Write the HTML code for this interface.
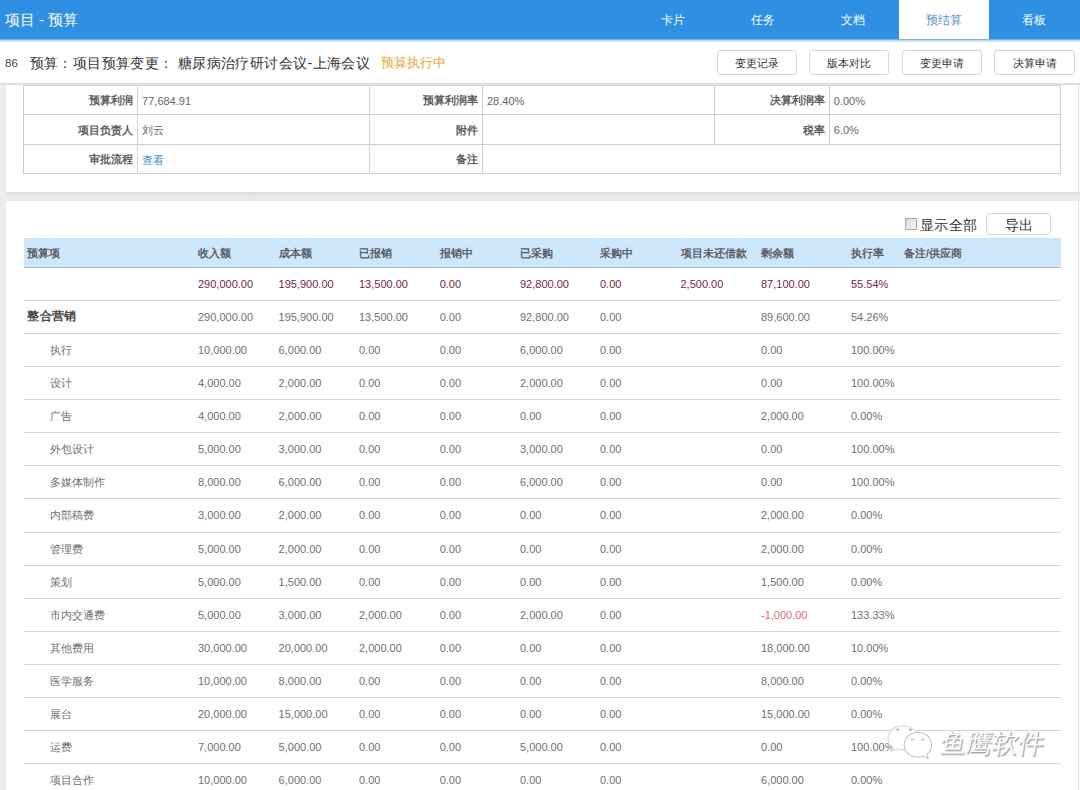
<!DOCTYPE html><html><head><meta charset="utf-8"><style>
*{margin:0;padding:0;box-sizing:border-box}
html,body{width:1080px;height:790px;overflow:hidden;background:#ededed;font-family:"Liberation Sans", sans-serif;}
.a{position:absolute;white-space:nowrap}
#hd{position:absolute;left:0;top:0;width:1080px;height:39px;background:#2e8fe3;}
#hd .t{left:5px;top:11px;font-size:14.5px;color:#fff;line-height:18px}
.tab{position:absolute;top:0;height:39px;width:90px;text-align:center;font-size:12px;line-height:40px;color:#fff}
.tab.on{background:#fff;color:#5a92c8}
#tb{position:absolute;left:0;top:39px;width:1080px;height:46px;background:#fff;border-bottom:2.5px solid #e0e0e0}
.btn{position:absolute;top:50.3px;height:24.5px;width:80.3px;border:1px solid #d6d8db;border-radius:3px;background:#fff;font-size:11px;line-height:24px;text-align:center;color:#333}
.card{position:absolute;left:5.7px;width:1074.3px;background:#fff}
.it{position:absolute;left:23.5px;top:85.3px;width:1037px;border-collapse:collapse}
.ln{position:absolute;background:#d0d0d0}
.lab{font-size:11px;color:#5e5e5e;font-weight:bold;text-align:right}
.val{font-size:11px;color:#707070}
.cell{position:absolute;font-size:11px;color:#707070;white-space:nowrap;line-height:14px}
.hcell{position:absolute;font-size:11px;color:#5a6068;font-weight:bold;white-space:nowrap;line-height:14px}
.red{color:#74283a}
.neg{color:#e06a78}
</style></head><body>
<div id="hd"><span class="a t">项目 - 预算</span>
<div class="tab" style="left:628.0px">卡片</div>
<div class="tab" style="left:718.2px">任务</div>
<div class="tab" style="left:808.4px">文档</div>
<div class="tab on" style="left:898.6px">预结算</div>
<div class="tab" style="left:988.8px">看板</div>
</div>
<div id="tb"></div>
<div class="a" style="left:0;top:38.5px;width:1080px;height:4px;background:linear-gradient(#5d9fd6,#bfe0fa 40%,#fff)"></div>
<span class="a" style="left:5px;top:55px;font-size:11.5px;color:#444;line-height:16px">86</span>
<span class="a" style="left:29.6px;top:53px;font-size:14px;letter-spacing:0.4px;color:#333;line-height:20px">预算：项目预算变更： 糖尿病治疗研讨会议-上海会议</span>
<span class="a" style="left:381px;top:55px;font-size:12.5px;color:#e9a52e;line-height:16px">预算执行中</span>
<div class="btn" style="left:716.6px">变更记录</div>
<div class="btn" style="left:809.2px">版本对比</div>
<div class="btn" style="left:901.8px">变更申请</div>
<div class="btn" style="left:994.4px">决算申请</div>
<div class="card" style="top:85px;height:107.5px"></div>
<div class="ln" style="left:23.5px;top:84.8px;width:1037px;height:1px"></div>
<div class="ln" style="left:23.5px;top:114.2px;width:1037px;height:1px"></div>
<div class="ln" style="left:23.5px;top:144.1px;width:1037px;height:1px"></div>
<div class="ln" style="left:23.5px;top:173.3px;width:1037px;height:1px"></div>
<div class="ln" style="left:23.0px;top:85px;width:1px;height:89px"></div>
<div class="ln" style="left:136.8px;top:85px;width:1px;height:89px"></div>
<div class="ln" style="left:368.8px;top:85px;width:1px;height:89px"></div>
<div class="ln" style="left:481.7px;top:85px;width:1px;height:89px"></div>
<div class="ln" style="left:1059.8px;top:85px;width:1px;height:89px"></div>
<div class="ln" style="left:714.1px;top:85px;width:1px;height:59.6px"></div>
<div class="ln" style="left:828.5px;top:85px;width:1px;height:59.6px"></div>
<span class="a lab" style="right:946.7px;top:93.0px;line-height:14px">预算利润</span>
<span class="a val" style="left:142.1px;top:93.7px;line-height:14px;color:#666">77,684.91</span>
<span class="a lab" style="right:601.8px;top:93.0px;line-height:14px">预算利润率</span>
<span class="a val" style="left:487.0px;top:93.7px;line-height:14px;color:#666">28.40%</span>
<span class="a lab" style="right:255.0px;top:93.0px;line-height:14px">决算利润率</span>
<span class="a val" style="left:833.8px;top:93.7px;line-height:14px;color:#666">0.00%</span>
<span class="a lab" style="right:946.7px;top:122.7px;line-height:14px">项目负责人</span>
<span class="a val" style="left:142.1px;top:123.4px;line-height:14px;color:#666">刘云</span>
<span class="a lab" style="right:601.8px;top:122.7px;line-height:14px">附件</span>
<span class="a lab" style="right:255.0px;top:122.7px;line-height:14px">税率</span>
<span class="a val" style="left:833.8px;top:123.4px;line-height:14px;color:#666">6.0%</span>
<span class="a lab" style="right:946.7px;top:152.2px;line-height:14px">审批流程</span>
<span class="a val" style="left:142.1px;top:152.9px;line-height:14px;color:#3a8ad0">查看</span>
<span class="a lab" style="right:601.8px;top:152.2px;line-height:14px">备注</span>
<div class="a" style="left:5.7px;top:192.3px;width:1075px;height:8.4px;background:linear-gradient(#d8dadb,#e4e7e7 30%,#e8ebeb)"></div>
<div class="card" style="top:200.7px;height:600px"></div>
<div class="a" style="left:905.3px;top:218.4px;width:11.7px;height:11.6px;border:1px solid #a8a8a8;background:linear-gradient(135deg,#d8d8d8,#f6f6f6)"></div>
<span class="a" style="left:920px;top:215px;font-size:14px;letter-spacing:0.35px;color:#333;line-height:20px">显示全部</span>
<div class="a" style="left:986px;top:213.3px;width:65.4px;height:21.4px;border:1px solid #d6d8db;border-radius:3px;background:#fff;font-size:14px;line-height:22px;text-align:center;color:#333">导出</div>
<div class="a" style="left:24px;top:238.2px;width:1036.5px;height:29.4px;background:#cee6fa;border-bottom:1.8px solid #a3bccf"></div>
<span class="hcell" style="left:27px;top:245.5px">预算项</span>
<span class="hcell" style="left:198px;top:245.5px">收入额</span>
<span class="hcell" style="left:278.6px;top:245.5px">成本额</span>
<span class="hcell" style="left:359px;top:245.5px">已报销</span>
<span class="hcell" style="left:439.7px;top:245.5px">报销中</span>
<span class="hcell" style="left:520px;top:245.5px">已采购</span>
<span class="hcell" style="left:600px;top:245.5px">采购中</span>
<span class="hcell" style="left:680.5px;top:245.5px">项目未还借款</span>
<span class="hcell" style="left:761px;top:245.5px">剩余额</span>
<span class="hcell" style="left:851px;top:245.5px">执行率</span>
<span class="hcell" style="left:904px;top:245.5px">备注/供应商</span>
<span class="cell red" style="left:198px;top:276.8px">290,000.00</span>
<span class="cell red" style="left:278.6px;top:276.8px">195,900.00</span>
<span class="cell red" style="left:359px;top:276.8px">13,500.00</span>
<span class="cell red" style="left:439.7px;top:276.8px">0.00</span>
<span class="cell red" style="left:520px;top:276.8px">92,800.00</span>
<span class="cell red" style="left:600px;top:276.8px">0.00</span>
<span class="cell red" style="left:680.5px;top:276.8px">2,500.00</span>
<span class="cell red" style="left:761px;top:276.8px">87,100.00</span>
<span class="cell red" style="left:851px;top:276.8px">55.54%</span>
<div class="ln" style="left:24px;top:299.8px;width:1036.5px;height:1px;background:#d4d6d9"></div>
<div class="ln" style="left:24px;top:332.9px;width:1036.5px;height:1px;background:#d4d6d9"></div>
<div class="ln" style="left:24px;top:366.0px;width:1036.5px;height:1px;background:#d4d6d9"></div>
<div class="ln" style="left:24px;top:399.1px;width:1036.5px;height:1px;background:#d4d6d9"></div>
<div class="ln" style="left:24px;top:432.2px;width:1036.5px;height:1px;background:#d4d6d9"></div>
<div class="ln" style="left:24px;top:465.3px;width:1036.5px;height:1px;background:#d4d6d9"></div>
<div class="ln" style="left:24px;top:498.4px;width:1036.5px;height:1px;background:#d4d6d9"></div>
<div class="ln" style="left:24px;top:531.5px;width:1036.5px;height:1px;background:#d4d6d9"></div>
<div class="ln" style="left:24px;top:564.6px;width:1036.5px;height:1px;background:#d4d6d9"></div>
<div class="ln" style="left:24px;top:597.7px;width:1036.5px;height:1px;background:#d4d6d9"></div>
<div class="ln" style="left:24px;top:630.8px;width:1036.5px;height:1px;background:#d4d6d9"></div>
<div class="ln" style="left:24px;top:663.9px;width:1036.5px;height:1px;background:#d4d6d9"></div>
<div class="ln" style="left:24px;top:697.0px;width:1036.5px;height:1px;background:#d4d6d9"></div>
<div class="ln" style="left:24px;top:730.1px;width:1036.5px;height:1px;background:#d4d6d9"></div>
<div class="ln" style="left:24px;top:763.2px;width:1036.5px;height:1px;background:#d4d6d9"></div>
<div class="ln" style="left:24px;top:796.3px;width:1036.5px;height:1px;background:#d4d6d9"></div>
<span class="cell" style="left:27.4px;top:309.4px;font-size:12px;letter-spacing:0.3px;font-weight:bold;color:#4a4a4a;line-height:15px">整合营销</span>
<span class="cell" style="left:198px;top:309.9px">290,000.00</span>
<span class="cell" style="left:278.6px;top:309.9px">195,900.00</span>
<span class="cell" style="left:359px;top:309.9px">13,500.00</span>
<span class="cell" style="left:439.7px;top:309.9px">0.00</span>
<span class="cell" style="left:520px;top:309.9px">92,800.00</span>
<span class="cell" style="left:600px;top:309.9px">0.00</span>
<span class="cell" style="left:761px;top:309.9px">89,600.00</span>
<span class="cell" style="left:851px;top:309.9px">54.26%</span>
<span class="cell" style="left:49.6px;top:342.9px">执行</span>
<span class="cell" style="left:198px;top:342.9px">10,000.00</span>
<span class="cell" style="left:278.6px;top:342.9px">6,000.00</span>
<span class="cell" style="left:359px;top:342.9px">0.00</span>
<span class="cell" style="left:439.7px;top:342.9px">0.00</span>
<span class="cell" style="left:520px;top:342.9px">6,000.00</span>
<span class="cell" style="left:600px;top:342.9px">0.00</span>
<span class="cell" style="left:761px;top:342.9px">0.00</span>
<span class="cell" style="left:851px;top:342.9px">100.00%</span>
<span class="cell" style="left:49.6px;top:376.1px">设计</span>
<span class="cell" style="left:198px;top:376.1px">4,000.00</span>
<span class="cell" style="left:278.6px;top:376.1px">2,000.00</span>
<span class="cell" style="left:359px;top:376.1px">0.00</span>
<span class="cell" style="left:439.7px;top:376.1px">0.00</span>
<span class="cell" style="left:520px;top:376.1px">2,000.00</span>
<span class="cell" style="left:600px;top:376.1px">0.00</span>
<span class="cell" style="left:761px;top:376.1px">0.00</span>
<span class="cell" style="left:851px;top:376.1px">100.00%</span>
<span class="cell" style="left:49.6px;top:409.2px">广告</span>
<span class="cell" style="left:198px;top:409.2px">4,000.00</span>
<span class="cell" style="left:278.6px;top:409.2px">2,000.00</span>
<span class="cell" style="left:359px;top:409.2px">0.00</span>
<span class="cell" style="left:439.7px;top:409.2px">0.00</span>
<span class="cell" style="left:520px;top:409.2px">0.00</span>
<span class="cell" style="left:600px;top:409.2px">0.00</span>
<span class="cell" style="left:761px;top:409.2px">2,000.00</span>
<span class="cell" style="left:851px;top:409.2px">0.00%</span>
<span class="cell" style="left:49.6px;top:442.2px">外包设计</span>
<span class="cell" style="left:198px;top:442.2px">5,000.00</span>
<span class="cell" style="left:278.6px;top:442.2px">3,000.00</span>
<span class="cell" style="left:359px;top:442.2px">0.00</span>
<span class="cell" style="left:439.7px;top:442.2px">0.00</span>
<span class="cell" style="left:520px;top:442.2px">3,000.00</span>
<span class="cell" style="left:600px;top:442.2px">0.00</span>
<span class="cell" style="left:761px;top:442.2px">0.00</span>
<span class="cell" style="left:851px;top:442.2px">100.00%</span>
<span class="cell" style="left:49.6px;top:475.4px">多媒体制作</span>
<span class="cell" style="left:198px;top:475.4px">8,000.00</span>
<span class="cell" style="left:278.6px;top:475.4px">6,000.00</span>
<span class="cell" style="left:359px;top:475.4px">0.00</span>
<span class="cell" style="left:439.7px;top:475.4px">0.00</span>
<span class="cell" style="left:520px;top:475.4px">6,000.00</span>
<span class="cell" style="left:600px;top:475.4px">0.00</span>
<span class="cell" style="left:761px;top:475.4px">0.00</span>
<span class="cell" style="left:851px;top:475.4px">100.00%</span>
<span class="cell" style="left:49.6px;top:508.4px">内部稿费</span>
<span class="cell" style="left:198px;top:508.4px">3,000.00</span>
<span class="cell" style="left:278.6px;top:508.4px">2,000.00</span>
<span class="cell" style="left:359px;top:508.4px">0.00</span>
<span class="cell" style="left:439.7px;top:508.4px">0.00</span>
<span class="cell" style="left:520px;top:508.4px">0.00</span>
<span class="cell" style="left:600px;top:508.4px">0.00</span>
<span class="cell" style="left:761px;top:508.4px">2,000.00</span>
<span class="cell" style="left:851px;top:508.4px">0.00%</span>
<span class="cell" style="left:49.6px;top:541.5px">管理费</span>
<span class="cell" style="left:198px;top:541.5px">5,000.00</span>
<span class="cell" style="left:278.6px;top:541.5px">2,000.00</span>
<span class="cell" style="left:359px;top:541.5px">0.00</span>
<span class="cell" style="left:439.7px;top:541.5px">0.00</span>
<span class="cell" style="left:520px;top:541.5px">0.00</span>
<span class="cell" style="left:600px;top:541.5px">0.00</span>
<span class="cell" style="left:761px;top:541.5px">2,000.00</span>
<span class="cell" style="left:851px;top:541.5px">0.00%</span>
<span class="cell" style="left:49.6px;top:574.6px">策划</span>
<span class="cell" style="left:198px;top:574.6px">5,000.00</span>
<span class="cell" style="left:278.6px;top:574.6px">1,500.00</span>
<span class="cell" style="left:359px;top:574.6px">0.00</span>
<span class="cell" style="left:439.7px;top:574.6px">0.00</span>
<span class="cell" style="left:520px;top:574.6px">0.00</span>
<span class="cell" style="left:600px;top:574.6px">0.00</span>
<span class="cell" style="left:761px;top:574.6px">1,500.00</span>
<span class="cell" style="left:851px;top:574.6px">0.00%</span>
<span class="cell" style="left:49.6px;top:607.8px">市内交通费</span>
<span class="cell" style="left:198px;top:607.8px">5,000.00</span>
<span class="cell" style="left:278.6px;top:607.8px">3,000.00</span>
<span class="cell" style="left:359px;top:607.8px">2,000.00</span>
<span class="cell" style="left:439.7px;top:607.8px">0.00</span>
<span class="cell" style="left:520px;top:607.8px">2,000.00</span>
<span class="cell" style="left:600px;top:607.8px">0.00</span>
<span class="cell neg" style="left:761px;top:607.8px">-1,000.00</span>
<span class="cell" style="left:851px;top:607.8px">133.33%</span>
<span class="cell" style="left:49.6px;top:640.8px">其他费用</span>
<span class="cell" style="left:198px;top:640.8px">30,000.00</span>
<span class="cell" style="left:278.6px;top:640.8px">20,000.00</span>
<span class="cell" style="left:359px;top:640.8px">2,000.00</span>
<span class="cell" style="left:439.7px;top:640.8px">0.00</span>
<span class="cell" style="left:520px;top:640.8px">0.00</span>
<span class="cell" style="left:600px;top:640.8px">0.00</span>
<span class="cell" style="left:761px;top:640.8px">18,000.00</span>
<span class="cell" style="left:851px;top:640.8px">10.00%</span>
<span class="cell" style="left:49.6px;top:674.0px">医学服务</span>
<span class="cell" style="left:198px;top:674.0px">10,000.00</span>
<span class="cell" style="left:278.6px;top:674.0px">8,000.00</span>
<span class="cell" style="left:359px;top:674.0px">0.00</span>
<span class="cell" style="left:439.7px;top:674.0px">0.00</span>
<span class="cell" style="left:520px;top:674.0px">0.00</span>
<span class="cell" style="left:600px;top:674.0px">0.00</span>
<span class="cell" style="left:761px;top:674.0px">8,000.00</span>
<span class="cell" style="left:851px;top:674.0px">0.00%</span>
<span class="cell" style="left:49.6px;top:707.0px">展台</span>
<span class="cell" style="left:198px;top:707.0px">20,000.00</span>
<span class="cell" style="left:278.6px;top:707.0px">15,000.00</span>
<span class="cell" style="left:359px;top:707.0px">0.00</span>
<span class="cell" style="left:439.7px;top:707.0px">0.00</span>
<span class="cell" style="left:520px;top:707.0px">0.00</span>
<span class="cell" style="left:600px;top:707.0px">0.00</span>
<span class="cell" style="left:761px;top:707.0px">15,000.00</span>
<span class="cell" style="left:851px;top:707.0px">0.00%</span>
<span class="cell" style="left:49.6px;top:740.1px">运费</span>
<span class="cell" style="left:198px;top:740.1px">7,000.00</span>
<span class="cell" style="left:278.6px;top:740.1px">5,000.00</span>
<span class="cell" style="left:359px;top:740.1px">0.00</span>
<span class="cell" style="left:439.7px;top:740.1px">0.00</span>
<span class="cell" style="left:520px;top:740.1px">5,000.00</span>
<span class="cell" style="left:600px;top:740.1px">0.00</span>
<span class="cell" style="left:761px;top:740.1px">0.00</span>
<span class="cell" style="left:851px;top:740.1px">100.00%</span>
<span class="cell" style="left:49.6px;top:773.2px">项目合作</span>
<span class="cell" style="left:198px;top:773.2px">10,000.00</span>
<span class="cell" style="left:278.6px;top:773.2px">6,000.00</span>
<span class="cell" style="left:359px;top:773.2px">0.00</span>
<span class="cell" style="left:439.7px;top:773.2px">0.00</span>
<span class="cell" style="left:520px;top:773.2px">0.00</span>
<span class="cell" style="left:600px;top:773.2px">0.00</span>
<span class="cell" style="left:761px;top:773.2px">6,000.00</span>
<span class="cell" style="left:851px;top:773.2px">0.00%</span>
<div class="a" style="left:1078.2px;top:85px;width:1px;height:107.3px;background:#dedede"></div>
<div class="a" style="left:1078.2px;top:200.7px;width:1px;height:590px;background:#dedede"></div>
<svg class="a" style="left:880px;top:718px" width="60" height="48" viewBox="880 718 60 48"><g fill="#fff" stroke="#c4c4c4" stroke-width="1.1"><path d="M903 726 C894 726 888 731.5 888 738.5 C888 742 890 745 893 747 L891 751 L897 749 C899 750 901 750 903 750 C912 750 918 744 918 738 C918 731.5 912 726 903 726 Z" stroke="#d4d4d4"/><path d="M918 732.5 C910 732.5 904.2 738 904.2 745 C904.2 752 910 757 918 757 C920 757 922 756.5 923.5 756 L928 758.5 L927 754 C930 752 931.5 749 931.5 745 C931.5 738 926 732.5 918 732.5 Z"/></g><g fill="#b0b0b0"><circle cx="897.6" cy="729.8" r="1.3"/><circle cx="910.3" cy="729.8" r="1.3"/><rect x="911" y="739" width="3" height="1.2"/><rect x="921.2" y="739" width="3" height="1.2"/></g></svg>
<span class="a" style="left:937.5px;top:726.5px;font-size:26px;color:#fff;line-height:32px;text-shadow:1px 1px 0 #a8a8a8,-0.5px -0.5px 0 #d0d0d0,1.5px 1.5px 1px #c8c8c8;transform:skewX(-9deg);transform-origin:0 100%">鱼鹰软件</span>
</body></html>
